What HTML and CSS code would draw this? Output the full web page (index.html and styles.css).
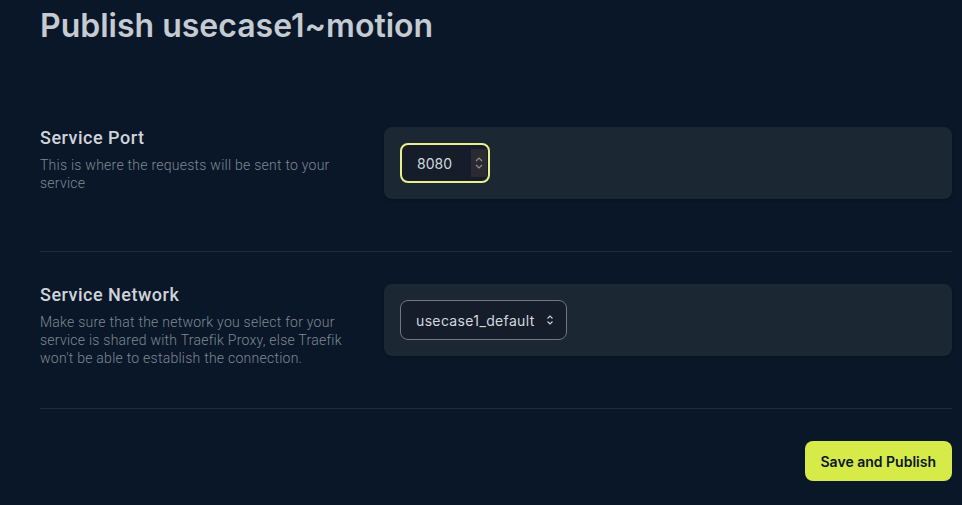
FILE: index.html
```html
<!DOCTYPE html>
<html lang="en">
<head>
    <meta charset="UTF-8">
    <meta name="viewport" content="width=device-width, initial-scale=1.0">
    <title>Publish usecase1~motion</title>
    <link rel="stylesheet" href="styles.css">
</head>
<body>
    <div class="page">
        <h1>Publish usecase1~motion</h1>

        <div class="section">
            <div class="info">
                <h2>Service Port</h2>
                <p>This is where the requests will be sent to your service</p>
            </div>
            <div class="card">
                <div class="number">
                    <span>8080</span>
                    <span class="spin">
                        <svg width="8" height="14" viewBox="0 0 8 14"><path d="M1 5 L4 2 L7 5 M1 9 L4 12 L7 9" fill="none" stroke="#8a8f99" stroke-width="1.2"/></svg>
                    </span>
                </div>
            </div>
        </div>

        <div class="section">
            <div class="info">
                <h2>Service Network</h2>
                <p>Make sure that the network you select for your service is shared with Traefik Proxy, else Traefik won't be able to establish the connection.</p>
            </div>
            <div class="card">
                <div class="select">
                    <span>usecase1_default</span>
                    <svg width="8" height="12" viewBox="0 0 8 12"><path d="M1.5 4.5 L4 2 L6.5 4.5 M1.5 7.5 L4 10 L6.5 7.5" fill="none" stroke="#c9ced6" stroke-width="1.2"/></svg>
                </div>
            </div>
        </div>

        <div class="actions">
            <button type="button">Save and Publish</button>
        </div>
    </div>
</body>
</html>
```

FILE: styles.css
```css
body {
    margin: 0;
    background-color: #0a1728;
    font-family: Inter, "Noto Sans", sans-serif;
    color: #c9ced6;
}

.page {
    padding: 0 10px 0 40px;
}

h1 {
    margin: 0;
    padding-top: 7px;
    height: 88px;
    font-size: 32px;
    font-weight: 600;
    line-height: 38px;
    color: #c5cbd2;
}

.section {
    display: grid;
    grid-template-columns: 320px 1fr;
    align-items: start;
    gap: 24px;
    padding: 32px 0 41px;
    border-bottom: 1px solid #1f2b3a;
}

.info h2 {
    margin: 0;
    font-family: Roboto, sans-serif;
    font-size: 18px;
    font-weight: 500;
    letter-spacing: 0.5px;
    line-height: 22px;
    color: #d0d4da;
}

.info p {
    margin: 7px 0 0;
    font-family: Roboto, sans-serif;
    font-size: 14px;
    font-weight: 300;
    letter-spacing: 0.25px;
    line-height: 18px;
    color: #7f8893;
}

.card {
    margin-bottom: 11px;
    background-color: #1b2733;
    border-radius: 8px;
    padding: 16px;
    box-shadow: 0 1px 3px rgba(0, 0, 0, 0.3);
}

.number {
    display: inline-flex;
    align-items: center;
    justify-content: space-between;
    width: 90px;
    height: 40px;
    box-sizing: border-box;
    padding: 0 1px 0 15px;
    border: 2px solid #e8f08e;
    border-radius: 8px;
    background-color: #141d29;
    font-size: 14px;
    color: #d3d8df;
}

.spin {
    display: flex;
    align-items: center;
    justify-content: center;
    width: 16px;
    height: 28px;
    background-color: #2b2a33;
}

.select {
    display: inline-flex;
    align-items: center;
    gap: 11px;
    height: 40px;
    box-sizing: border-box;
    padding: 0 12px 0 15px;
    border: 1px solid #6d7886;
    border-radius: 8px;
    background-color: #141d29;
    font-size: 14px;
    letter-spacing: 0.35px;
    color: #d3d8df;
}

.actions {
    display: flex;
    justify-content: flex-end;
    padding-top: 32px;
}

button {
    height: 40px;
    padding: 0 16px;
    background-color: #d6ea48;
    color: #0a1728;
    border: none;
    border-radius: 8px;
    font-family: Inter, sans-serif;
    font-size: 14px;
    font-weight: 600;
    cursor: pointer;
}
```
